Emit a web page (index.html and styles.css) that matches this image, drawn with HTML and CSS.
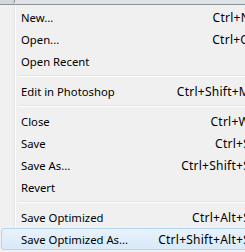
FILE: index.html
```html
<!DOCTYPE html>
<html lang="en">
<head>
  <meta charset="UTF-8">
  <title>File menu</title>
  <link rel="stylesheet" href="styles.css">
</head>
<body>

  <div class="menubar">
    <div class="menubar-tab"></div>
    <div class="menubar-rest"></div>
  </div>

  <div class="menu">
    <div class="item"><span>New...</span><span class="key">Ctrl+N</span></div>
    <div class="item"><span>Open...</span><span class="key">Ctrl+O</span></div>
    <div class="item"><span>Open Recent</span><span class="key"></span></div>
    <div class="sep"></div>
    <div class="item"><span>Edit in Photoshop</span><span class="key">Ctrl+Shift+M</span></div>
    <div class="sep"></div>
    <div class="item"><span>Close</span><span class="key">Ctrl+W</span></div>
    <div class="item"><span>Save</span><span class="key">Ctrl+S</span></div>
    <div class="item"><span>Save As...</span><span class="key">Ctrl+Shift+S</span></div>
    <div class="item"><span>Revert</span><span class="key"></span></div>
    <div class="sep"></div>
    <div class="item"><span>Save Optimized</span><span class="key">Ctrl+Alt+S</span></div>
    <div class="item active"><span>Save Optimized As...</span><span class="key">Ctrl+Shift+Alt+S</span></div>
  </div>

</body>
</html>
```

FILE: styles.css
```css
* {
  box-sizing: border-box;
}

html, body {
  margin: 0;
  overflow: hidden;
}

body {
  width: 245px;
  height: 252px;
  background: #f0f0f0;
  font-family: 'Noto Sans', 'Open Sans', sans-serif;
  font-size: 11.3px;
  color: #000;
}

.menubar {
  display: flex;
  height: 5px;
  border-bottom: 1px solid #8e9196;
}

.menubar-tab {
  width: 15px;
  background: #d4d7db;
  border-right: 1px solid #8e9196;
  border-bottom-right-radius: 3px;
}

.menubar-rest {
  flex: 1;
  background: #dfe3e8;
}

.menu {
  width: 280px;
  padding-top: 1px;
  background: linear-gradient(to right, #f0f0f0 14px, #e2e3e3 14px, #e2e3e3 15px, #fff 15px, #fff 16px, #f0f0f0 16px);
}

.item {
  display: flex;
  justify-content: space-between;
  align-items: center;
  height: 22px;
  margin-left: 1px;
  padding-left: 19px;
  padding-right: 29px;
  border: 1px solid transparent;
  border-radius: 3px;
  white-space: nowrap;
}

.item.active {
  background: linear-gradient(#e8f2fb, #d9e9f8);
  border-color: #b4d6f1;
}

.key {
  text-align: right;
  font-size: 12px;
  letter-spacing: 0.25px;
}

.sep {
  height: 8px;
  margin-left: 18px;
  background: linear-gradient(transparent 3px, #e2e3e3 3px, #e2e3e3 4px, #fff 4px, #fff 5px, transparent 5px);
}
```
